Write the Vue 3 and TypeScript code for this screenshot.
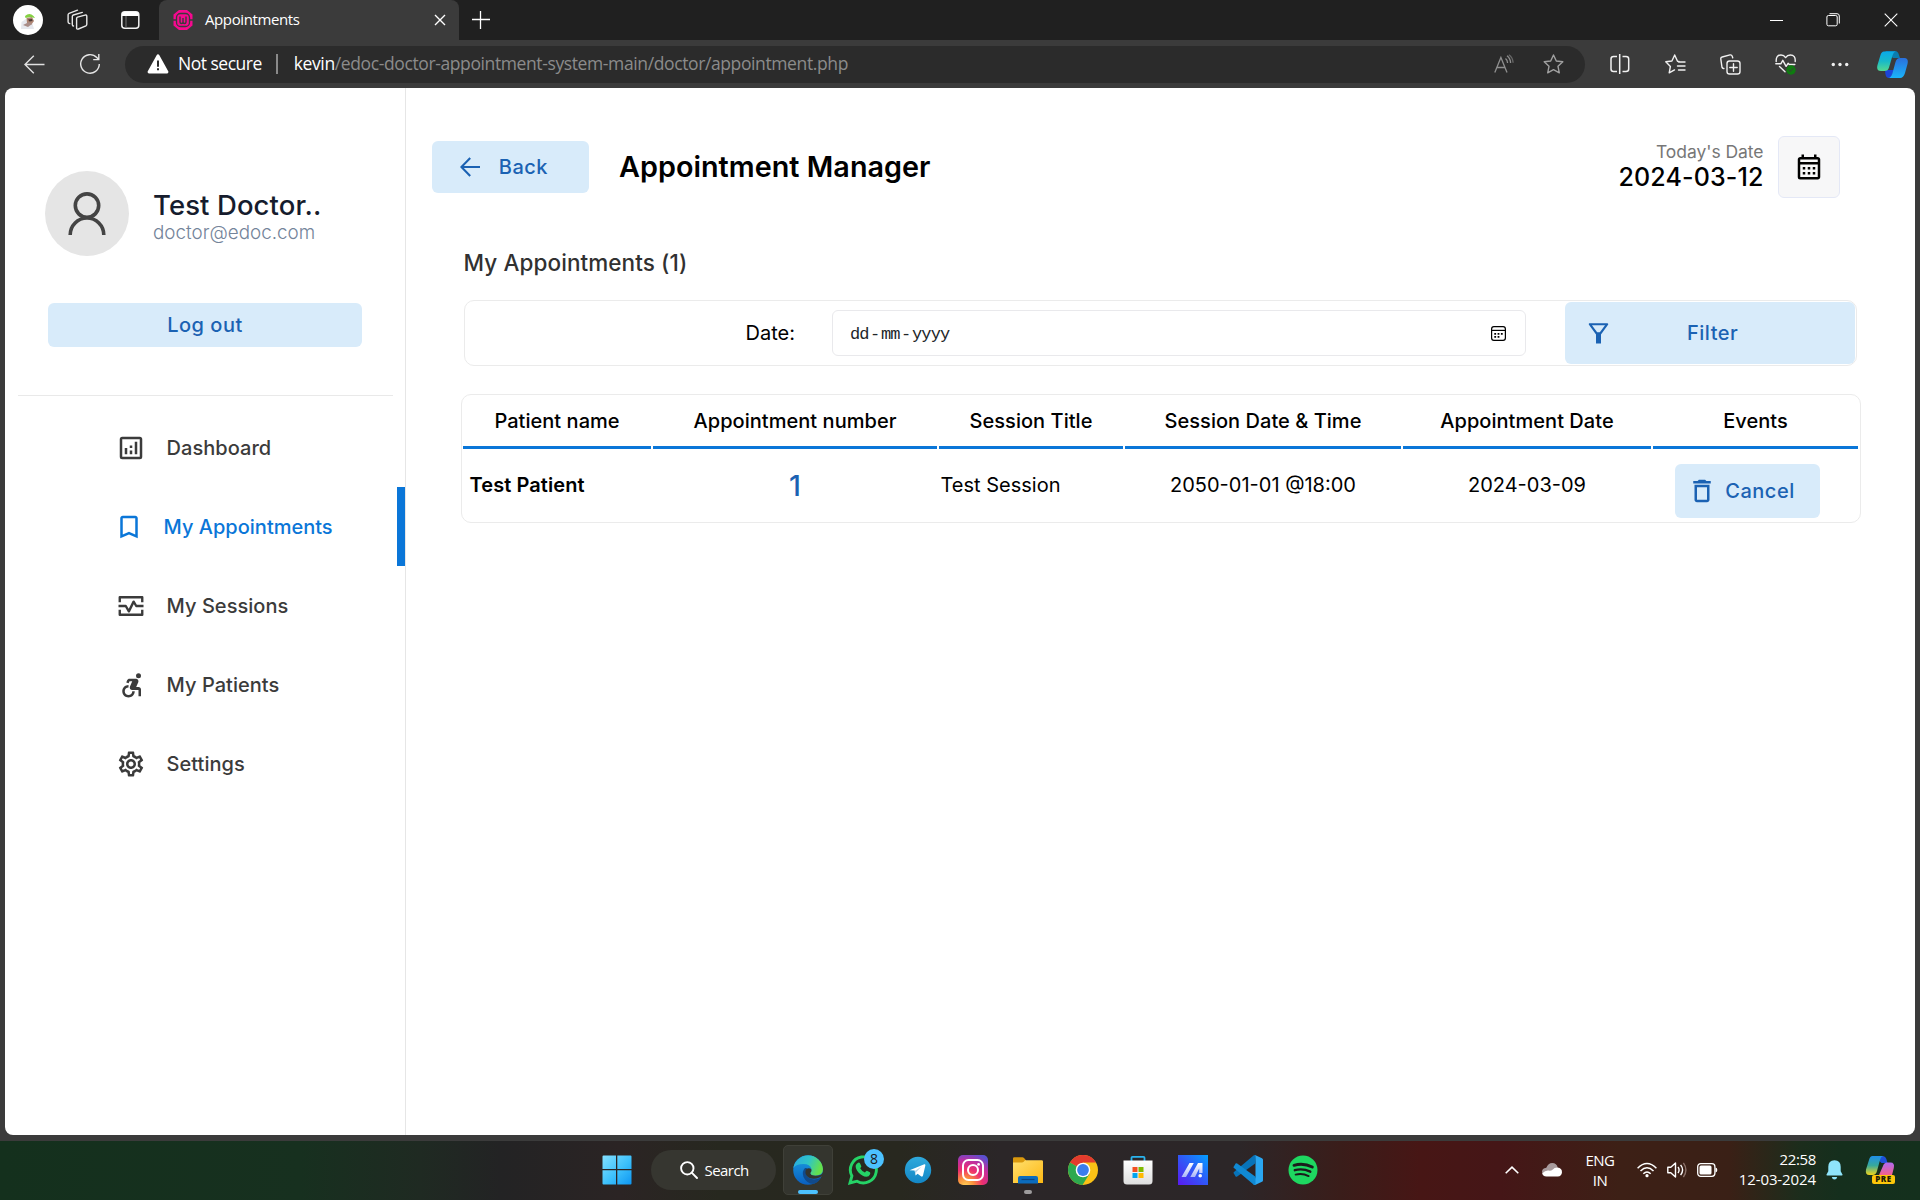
<script setup lang="ts">
interface MenuItem { id: string; label: string; active?: boolean }

const menu: MenuItem[] = [
  { id: 'dashboard', label: 'Dashboard' },
  { id: 'appointments', label: 'My Appointments', active: true },
  { id: 'sessions', label: 'My Sessions' },
  { id: 'patients', label: 'My Patients' },
  { id: 'settings', label: 'Settings' },
]

const columns: string[] = ['Patient name', 'Appointment number', 'Session Title', 'Session Date & Time', 'Appointment Date', 'Events']
</script>

<template>
  <div class="screen">
    <header class="tabstrip">
      <div class="profile">
        <svg width="30" height="30" viewBox="0 0 30 30"><circle cx="15" cy="15" r="15" fill="#fff" /><path d="M8 24l.5-7 4.500-3 6 3 2 7z" fill="#e6e8ee" /><path d="M13.500 13l5.500-1 2 4-3 4-4-2z" fill="#b08674" /><path d="M10 20l6-3 3 2-4 3z" fill="#a98d88" /><path d="M15 14.500l4-.5.5 2-3 .5z" fill="#4d3a36" /><path d="M12 11q4.500-4 8.500 0l1.500 2-5-1-4.500 1z" fill="#85d143" /></svg>
      </div>
      <svg class="ws" width="22" height="22" viewBox="0 0 22 22" fill="none" stroke="#e8e8e8" stroke-width="1.4" stroke-linejoin="round" stroke-linecap="round"><path d="M9.600 9.600q0-1 .9-1.400l7.500-2.100q1.800-.4 1.800 1.200v8q0 1-.9 1.500l-7.500 3.200q-1.800.5-1.800-1.100z" /><path d="M6.500 17q-1.200 0-1.200-1.500V7.500q0-1 1-1.500l9-2.600" /><path d="M2.800 14.600q-1.700-.2-1.700-1.500V5.800q0-1 1-1.500L10.500 1.200" /></svg>
      <svg class="vt" width="19" height="18" viewBox="0 0 19 18"><rect x=".8" y=".8" width="17" height="16.400" rx="3" fill="none" stroke="#f2f2f2" stroke-width="1.500" /><path d="M1 5V3q0-2 2-2h12.500q2 0 2 2v2z" fill="#fff" /><path d="M5 5v12" stroke="#777" stroke-width="1" /></svg>
      <div class="tab">
        <svg width="20" height="20" viewBox="0 0 20 20"><path d="M6 0h8l5.500 4.500v11L14 20H6L.5 15.500v-11z" fill="#f6098f" /><rect x="3.500" y="3.500" width="13" height="13" rx="4" fill="none" stroke="#3b3b3b" stroke-width="1.300" /><path d="M7 6.500v5.500q0 1.500 1.500 1.500T10 12V8v4q0 1.500 1.500 1.500T13 12V6.500M0 10h3.500M16.500 10H20" fill="none" stroke="#3b3b3b" stroke-width="1.400" /></svg>
        <span class="tab-title">Appointments</span>
        <svg class="tab-x" width="12" height="12" viewBox="0 0 12 12" stroke="#fff" stroke-width="1.400"><path d="M1 1l10 10M11 1L1 11" /></svg>
      </div>
      <svg class="plus" width="18" height="18" viewBox="0 0 18 18" stroke="#fff" stroke-width="1.300"><path d="M0 8.500h18M8.500 0v18" /></svg>
      <div class="grow"></div>
      <svg class="win min" width="13" height="14" viewBox="0 0 13 14" stroke="#fff" stroke-width="1"><path d="M0 7.500h13" /></svg>
      <svg class="win" width="14" height="14" viewBox="0 0 14 14" fill="none" stroke="#fff" stroke-width="1"><rect x=".9" y="2.500" width="10.300" height="10.300" rx="1.500" /><path d="M3.500.7h7.500q2.300 0 2.300 2.300v7.500" /></svg>
      <svg class="win" width="14" height="14" viewBox="0 0 14 14" stroke="#fff" stroke-width="1.100"><path d="M.7.7l12.600 12.600M13.300.7L.7 13.300" /></svg>
    </header>

    <div class="toolbar">
      <svg class="nav-back" width="21" height="19" viewBox="0 0 21 19" fill="none" stroke="#e0e0e0" stroke-width="1.400"><path d="M20.500 9.500H1M9.800.8L1 9.500l8.800 8.700" /></svg>
      <svg class="nav-reload" width="22" height="22" viewBox="0 0 22 22" fill="none" stroke="#e6e6e6" stroke-width="1.400"><path d="M20.300 11A9.300 9.300 0 1 1 17.800 4.600l1.800 1.900M19.800 1v5.600h-5.600" /></svg>
      <div class="address">
        <svg width="22" height="20" viewBox="0 0 22 20"><path d="M11 1.800L20 18H2z" fill="#fff" stroke="#fff" stroke-width="2.800" stroke-linejoin="round" /><path d="M11 6.500v6.200M11 14.300v2" stroke="#2b2b2b" stroke-width="2" /></svg>
        <span class="insecure">Not secure</span>
        <span class="sep"></span>
        <span class="url"><span class="host">kevin</span>/edoc-doctor-appointment-system-main/doctor/appointment.php</span>
        <div class="grow"></div>
        <svg class="read" width="20" height="20" viewBox="0 0 20 20" fill="none" stroke="#8f8f8f" stroke-width="1.300"><path d="M.8 18.500L6.900 3.400 13 18.500M3 13.500h7.800M11.500 4.600q2 1.500 2.100 4.400M13 1.800q3.400 2.600 3.600 7.200" /><path d="M14.800.8q4 2.600 4.300 8" opacity=".6" /></svg>
        <svg class="star" width="21" height="20" viewBox="0 0 21 20" fill="none" stroke="#a0a0a0" stroke-width="1.400" stroke-linejoin="round"><path d="M10.500 1l2.800 6 6.500.8-4.800 4.500 1.300 6.500-5.800-3.200-5.800 3.200L6 12.300 1.200 7.800 7.700 7z" /></svg>
      </div>
      <svg class="tb t1" width="20" height="20" viewBox="0 0 20 20" fill="none" stroke="#f0f0f0" stroke-width="1.500"><path d="M7 2.500H3.500Q1 2.500 1 5v10q0 2.500 2.500 2.500H7M12.500 2.500H16q2.700 0 2.700 2.500v10q0 2.500-2.700 2.500h-3.500M9.700 0v20" /></svg>
      <svg class="tb t2" width="21" height="20" viewBox="0 0 21 20" fill="none" stroke="#f0f0f0" stroke-width="1.400" stroke-linejoin="round" stroke-linecap="round"><path d="M14 7.500l-1.500-.3L9.700 1 6.900 7 .8 7.800l4.600 4.600-1.200 6.400 5.300-2.900M13.500 8h6.500M12.500 12h7.500M13.500 16h6.500" /></svg>
      <svg class="tb t3" width="21" height="21" viewBox="0 0 21 21" fill="none" stroke="#f0f0f0" stroke-width="1.400" stroke-linecap="round"><rect x="7" y="7" width="13" height="13" rx="2.600" /><path d="M13.500 9.800v7.400M9.800 13.500h7.400M3.900 14.500q-1.500.2-1.900-1.200L.8 5q-.2-1.600 1.400-2L10 .9q1.700-.3 2.200 1.200l.5 1.700" /></svg>
      <svg class="tb t4" width="22" height="21" viewBox="0 0 22 21" fill="none" stroke="#f0f0f0" stroke-width="1.400" stroke-linecap="round" stroke-linejoin="round"><path d="M1.200 7.500Q.8 1 6 1q3 0 4.600 2.600Q12.300 1 15.300 1q5.400 0 4.900 6.500M.8 9.800h5l2-3.500 3.300 6 2-3 1.200 1.200h5.500M4.500 12.500l5.500 5.300" /><circle cx="16" cy="16" r="4.700" fill="#0f7b10" stroke="none" /><path d="M13.800 16l1.500 1.500 2.700-3" stroke="#3b3b3b" stroke-width="1" /></svg>
      <svg class="tb t5" width="18" height="5" viewBox="0 0 18 5" fill="#f0f0f0"><circle cx="2.300" cy="2.500" r="1.700" /><circle cx="9" cy="2.500" r="1.700" /><circle cx="15.700" cy="2.500" r="1.700" /></svg>
      <svg class="tb t6" width="31" height="27" viewBox="0 0 31 27">
        <defs>
          <linearGradient id="cpA" x1="0" y1="0" x2="0" y2="1"><stop offset="0" stop-color="#0aa9e8" /><stop offset=".5" stop-color="#18b9c9" /><stop offset="1" stop-color="#54d990" /></linearGradient>
          <linearGradient id="cpB" x1="0" y1="0" x2="0" y2="1"><stop offset="0" stop-color="#2a6fdc" /><stop offset="1" stop-color="#1ab4fa" /></linearGradient>
        </defs>
        <path d="M8 0h10q3 0 4 4l1 3h-7z" fill="#0a7cae" /><path d="M8 19h9l-2 5q-1 3-3 3-3 0-3.600-4z" fill="#1c45d8" />
        <path d="M7 .5h11.500q-2 .5-3 4L12 16.500q-1 3.500-4.500 3.500H4q-5 0-3.500-6L3.500 4Q4.500.5 7 .5z" fill="url(#cpA)" />
        <path d="M23 7h4.500q4.300 0 3 6L28 22q-1.500 5-5 5H11.500q2.700-.5 4-5l3-11q1.200-4 4.500-4z" fill="url(#cpB)" />
      </svg>
    </div>

    <main class="page">
      <aside class="sidebar">
        <div class="who">
          <svg width="84" height="85" viewBox="0 0 84 85"><ellipse cx="42" cy="42.500" rx="42" ry="42.500" fill="#e5e5e5" /><g fill="none" stroke="#444" stroke-width="3.600"><circle cx="42" cy="34.600" r="11.700" /><path d="M25.200 64a16.800 17 0 0 1 33.600 0" /></g></svg>
          <div class="who-text">
            <p class="who-name">Test Doctor..</p>
            <p class="who-mail">doctor@edoc.com</p>
          </div>
        </div>
        <button class="btn logout">Log out</button>
        <div class="rule"></div>
        <nav>
          <a v-for="m in menu" :key="m.id" :class="['item', { active: m.active }]">
            <svg width="30" height="30" viewBox="0 0 24 24" fill="currentColor">
              <template v-if="m.id === 'dashboard'"><rect x="4" y="4" width="16" height="16" rx="1" fill="none" stroke="currentColor" stroke-width="2" /><path d="M7 12h2v5H7zM15 7h2v10h-2zM11 14h2v3h-2zM11 10h2v2h-2z" /></template>
              <path v-else-if="m.id === 'appointments'" d="M17 3H7c-1.100 0-2 .9-2 2v16l7-3 7 3V5c0-1.100-.9-2-2-2zm0 15l-5-2.180L7 18V5h10v13z" />
              <path v-else-if="m.id === 'sessions'" fill="none" stroke="currentColor" stroke-width="1.900" stroke-linejoin="round" d="M3 9V5h18v4M3 15v4h18v-4M2 12h5.800l2.500 4.300 3.800-7.800 2.100 3.500H22" />
              <template v-else-if="m.id === 'patients'"><circle cx="18" cy="4.540" r="2" /><path d="M15 17h-2c0 1.650-1.350 3-3 3s-3-1.350-3-3 1.350-3 3-3v-2c-2.760 0-5 2.240-5 5s2.240 5 5 5 5-2.240 5-5zm3-3.500h-1.860l1.670-3.670C18.420 8.500 17.440 7 15.960 7h-5.200c-.81 0-1.540.47-1.870 1.200L8.220 10l1.920.53.65-1.530H13l-1.830 4.100c-.6 1.330.39 2.900 1.850 2.900H18v5h2v-5.500c0-1.100-.9-2-2-2z" /></template>
              <path v-else d="M19.430 12.980c.04-.32.07-.64.07-.98s-.03-.66-.07-.98l2.110-1.650c.19-.15.24-.42.12-.64l-2-3.460c-.09-.16-.26-.25-.44-.25-.06 0-.12.010-.17.030l-2.490 1c-.52-.4-1.080-.73-1.690-.98l-.38-2.650C14.460 2.180 14.250 2 14 2h-4c-.25 0-.46.18-.49.42l-.38 2.650c-.61.25-1.170.59-1.690.98l-2.490-1c-.06-.02-.12-.03-.18-.03-.17 0-.34.09-.43.25l-2 3.460c-.13.22-.07.49.12.64l2.110 1.650c-.04.32-.07.65-.07.98s.03.66.07.98l-2.110 1.650c-.19.15-.24.42-.12.64l2 3.460c.09.16.26.25.44.25.06 0 .12-.01.17-.03l2.490-1c.52.4 1.080.73 1.690.98l.38 2.650c.03.24.24.42.49.42h4c.25 0 .46-.18.49-.42l.38-2.650c.61-.25 1.170-.59 1.690-.98l2.490 1c.06.02.12.03.18.03.17 0 .34-.09.43-.25l2-3.460c.12-.22.07-.49-.12-.64l-2.110-1.650zm-1.980-1.710c.04.31.05.52.05.73 0 .21-.02.43-.05.73l-.14 1.130.89.7 1.080.84-.7 1.210-1.270-.51-1.040-.42-.9.68c-.43.32-.84.56-1.250.73l-1.060.43-.16 1.130-.2 1.350h-1.400l-.19-1.350-.16-1.130-1.060-.43c-.43-.18-.83-.41-1.230-.71l-.91-.7-1.060.43-1.270.51-.7-1.210 1.080-.84.89-.7-.14-1.130c-.03-.31-.05-.54-.05-.74s.02-.43.05-.73l.14-1.130-.89-.7-1.080-.84.7-1.210 1.270.51 1.040.42.9-.68c.43-.32.84-.56 1.250-.73l1.060-.43.16-1.130.2-1.350h1.390l.19 1.350.16 1.130 1.060.43c.43.18.83.41 1.230.71l.91.7 1.060-.43 1.270-.51.7 1.210-1.070.85-.89.7.14 1.130zM12 8c-2.210 0-4 1.790-4 4s1.790 4 4 4 4-1.790 4-4-1.790-4-4-4zm0 6c-1.100 0-2-.9-2-2s.9-2 2-2 2 .9 2 2-.9 2-2 2z" />
            </svg>
            <span>{{ m.label }}</span>
          </a>
        </nav>
      </aside>

      <section class="content">
        <div class="head">
          <button class="btn back">
            <svg width="20" height="20" viewBox="0 0 20 20" fill="none" stroke="#1b62b3" stroke-width="2.100"><path d="M20 10H1.500M10.200 1L1.400 10l8.800 9" /></svg>
            <span>Back</span>
          </button>
          <h1>Appointment Manager</h1>
          <div class="grow"></div>
          <div class="today">
            <p class="today-l">Today's Date</p>
            <p class="today-d">2024-03-12</p>
          </div>
          <div class="cal">
            <svg width="30" height="30" viewBox="0 0 24 24"><path d="M19 4h-1V2h-2v2H8V2H6v2H5c-1.110 0-1.990.9-1.990 2L3 20a2 2 0 0 0 2 2h14c1.100 0 2-.9 2-2V6c0-1.100-.9-2-2-2zm0 16H5V10h14v10zm0-12H5V6h14v2zM9 14H7v-2h2v2zm4 0h-2v-2h2v2zm4 0h-2v-2h2v2zm-8 4H7v-2h2v2zm4 0h-2v-2h2v2zm4 0h-2v-2h2v2z" /></svg>
          </div>
        </div>

        <h2>My Appointments (1)</h2>

        <div class="filter">
          <label>Date:</label>
          <div class="date">
            <span class="mask"><b>dd</b>-<b>mm</b>-<b>yyyy</b></span>
            <svg width="15" height="15" viewBox="0 0 15 15"><rect x=".6" y=".6" width="13.800" height="13.800" rx="2.300" fill="none" stroke="#000" stroke-width="1.200" /><path d="M.6 4.400h13.800" stroke="#000" stroke-width="1.200" /><path d="M3.300 7.900h1.800M6.600 7.900h1.800M9.900 7.900h1.800M3.300 10.900h1.800M6.600 10.900h1.800" stroke="#000" stroke-width="1.700" /></svg>
          </div>
          <button class="btn go">
            <svg width="21" height="21" viewBox="0 0 21 21"><path d="M1.800 1.200h17.400L12.300 10.500h-3.600z" fill="none" stroke="#1b62b3" stroke-width="2.100" stroke-linejoin="round" /><path d="M8 9.500h5V20.500H8z" fill="#1b62b3" /></svg>
            <span>Filter</span>
          </button>
        </div>

        <div class="table">
          <div v-for="c in columns" :key="c" class="th">{{ c }}</div>
          <div class="td name">Test Patient</div>
          <div class="td num">1</div>
          <div class="td left">Test Session</div>
          <div class="td">2050-01-01 @18:00</div>
          <div class="td">2024-03-09</div>
          <div class="td act">
            <button class="btn cancel">
              <svg width="30" height="30" viewBox="0 0 24 24" fill="#1b62b3"><path d="M16 9v10H8V9h8m-1.500-6h-5l-1 1H5v2h14V4h-3.500l-1-1zM18 7H6v12c0 1.100.9 2 2 2h8c1.100 0 2-.9 2-2V7z" /></svg>
              <span>Cancel</span>
            </button>
          </div>
        </div>
      </section>
    </main>

    <footer class="taskbar">
      <svg class="start" width="30" height="30" viewBox="0 0 30 30"><defs><linearGradient id="wn" x1="0" y1="0" x2="1" y2="1"><stop offset="0" stop-color="#84e0ff" /><stop offset=".55" stop-color="#3cc0fb" /><stop offset="1" stop-color="#0e96f2" /></linearGradient></defs><path d="M1.500.5H14v13.500H.5V1.500q0-1 1-1zM15.300.5h13.200q1 0 1 1V14H15.300zM.5 15.300H14v14.200H1.500q-1 0-1-1zM15.300 15.300h14.200v13.200q0 1-1 1H15.300z" fill="url(#wn)" /></svg>
      <div class="search">
        <svg width="18" height="18" viewBox="0 0 18 18" fill="none" stroke="#fff" stroke-width="1.900"><circle cx="7.300" cy="7.300" r="6.200" /><path d="M11.700 11.700l5.300 5.300" stroke-linecap="round" /></svg>
        <span>Search</span>
      </div>
      <div class="app on">
        <svg width="30" height="30" viewBox="0 0 30 30">
          <defs>
            <linearGradient id="eg1" x1="0" y1="0" x2="1" y2=".3"><stop offset="0" stop-color="#2aa8e0" /><stop offset=".55" stop-color="#2fc4c8" /><stop offset="1" stop-color="#64e04c" /></linearGradient>
            <linearGradient id="eg2" x1="0" y1="0" x2="0" y2="1"><stop offset="0" stop-color="#1b9fe2" /><stop offset="1" stop-color="#0a5fc0" /></linearGradient>
          </defs>
          <circle cx="15" cy="15" r="14.800" fill="url(#eg2)" />
          <path d="M12 13q-3.500 3.500-1.500 9 3 6.500 10 7 5-1.500 7.500-6.500-7 3.500-12 .5-5-4-2-10z" fill="#114a8b" />
          <path d="M30.500 16q-.5 4.500-8 4.500-5 0-5-2.500 1.500-1.300 1.200-3.500-3-2.500-5.700 0-2 5 3 8.200 5 2.500 11-.5l3.500-2z" fill="#34352e" />
          <path d="M.3 13A15 15 0 0 1 30 14q0 6.500-7.500 6.500-5 0-5-2.500 1.800-1.500 1-4Q17 9 10.500 9 3 9 .3 13z" fill="url(#eg1)" />
        </svg>
        <i class="bar"></i>
      </div>
      <div class="app">
        <svg width="30" height="30" viewBox="0 0 30 30"><path d="M2 28l1.900-7A13 13 0 1 1 9 26.200z" fill="none" stroke="#25d366" stroke-width="2.900" /><path d="M10.200 7.800q1-.6 1.800.5l1.300 2.900q.2.700-1.100 2.100 1.600 3 4.700 4.300 1.400-1.900 2-1.800l3 1.500q.7.500.2 1.900-1.100 2.500-3.800 2.500-4-.3-7.800-4.300-3.500-4-2.700-7.100.7-2 2.400-2.500z" fill="#25d366" /></svg>
        <b class="count">8</b>
      </div>
      <div class="app"><svg width="30" height="30" viewBox="0 0 30 30"><defs><linearGradient id="tg" x1="0" y1="0" x2="0" y2="1"><stop offset="0" stop-color="#2fa9dc" /><stop offset="1" stop-color="#1387c6" /></linearGradient></defs><circle cx="15" cy="15" r="13.200" fill="url(#tg)" /><path d="M6.600 15.200L21.300 9.300q1.500-.4 1 1.500L20 20.600q-.5 1.700-2 .7l-3.400-2.600-2 1.900-1-5z" fill="#fff" /><path d="M11.800 16l6.700-4.500-5.200 5.500-.6 3z" fill="#b8d5e8" /></svg></div>
      <div class="app"><svg width="30" height="30" viewBox="0 0 30 30"><defs><radialGradient id="ig" cx=".25" cy="1.050" r="1.150"><stop offset="0" stop-color="#ffd75a" /><stop offset=".25" stop-color="#fb8f3c" /><stop offset=".5" stop-color="#ed2f6f" /><stop offset=".75" stop-color="#c22e9e" /><stop offset="1" stop-color="#5a50d0" /></radialGradient></defs><rect width="30" height="30" rx="5" fill="url(#ig)" /><g fill="none" stroke="#fff" stroke-width="2"><rect x="5" y="5" width="20" height="20" rx="5.500" /><circle cx="15" cy="15" r="5" /></g><circle cx="20.600" cy="9.400" r="1.400" fill="#fff" /></svg></div>
      <div class="app">
        <svg width="30" height="30" viewBox="0 0 30 30"><defs><linearGradient id="fd" x1="0" y1="0" x2="1" y2="1"><stop offset="0" stop-color="#ffdf6e" /><stop offset="1" stop-color="#fdb813" /></linearGradient></defs><path d="M0 9V3.500q0-1.300 1.300-1.300h8.200q.8 0 1.500.8l2 2.200V9z" fill="#d9980d" /><path d="M0 7.500h9q1 0 1.700-.8l1.300-1.500h16.500q1.500 0 1.500 1.300V28H0z" fill="url(#fd)" /><path d="M5 28.500V23q0-2 2-2h16q2 0 2 2v5.500z" fill="#0c6cbd" /><path d="M8.500 24.500h13" stroke="#0a4584" stroke-width="1.200" /></svg>
        <i class="dot"></i>
      </div>
      <div class="app"><svg width="30" height="30" viewBox="0 0 30 30"><circle cx="15" cy="15" r="15" fill="#fbc116" /><path d="M15 15L2 7.500A15 15 0 0 1 28 7.500H15z" fill="#e33b2e" /><path d="M2 7.500A15 15 0 0 0 14.500 30L21.500 18.800 15 15z" fill="#2da94f" /><circle cx="15" cy="15" r="7.300" fill="#fff" /><circle cx="15" cy="15" r="5.900" fill="#3b7ded" /></svg></div>
      <div class="app"><svg width="30" height="30" viewBox="0 0 30 30"><defs><linearGradient id="st" x1="0" y1="0" x2="0" y2="1"><stop offset="0" stop-color="#fff" /><stop offset="1" stop-color="#dedede" /></linearGradient></defs><path d="M8.500 7V2.800q0-1 1-1h11q1 0 1 1V7" fill="none" stroke="#2ab4ee" stroke-width="1.800" /><path d="M.5 5.500h29V26q0 3.500-3.500 3.500H4Q.5 29.500.5 26z" fill="url(#st)" /><path d="M9.500 12h5v5h-5z" fill="#f25022" /><path d="M15.500 12h5v5h-5z" fill="#7fba00" /><path d="M9.500 18h5v5h-5z" fill="#00a4ef" /><path d="M15.500 18h5v5h-5z" fill="#ffb900" /></svg></div>
      <div class="app"><svg width="30" height="30" viewBox="0 0 30 30"><defs><linearGradient id="as" x1="0" y1="1" x2="1" y2="0"><stop offset="0" stop-color="#5a19f0" /><stop offset=".5" stop-color="#3157f7" /><stop offset="1" stop-color="#02a0ff" /></linearGradient><linearGradient id="as2" x1="0" y1="0" x2="0" y2="1"><stop offset="0" stop-color="#fff" /><stop offset="1" stop-color="#a9b6f8" /></linearGradient></defs><path d="M0 0h30v30H0z" fill="url(#as)" /><path d="M11.500 8h4.300L8 22H3.500zM20 8h4.500v10h-3.300v-4.500L17 22h-4.700z" fill="url(#as2)" /><circle cx="22.200" cy="20.700" r="1.800" fill="#fff" /></svg></div>
      <div class="app"><svg width="30" height="30" viewBox="0 0 30 30"><path d="M22 0l7 3.200q1 .5 1 1.600v20.400q0 1.100-1 1.600L22 30q-.8.200-1.500-.5L22.500 22V8z" fill="#2aa7f2" /><path d="M1 18.800q-1-1 0-1.900L20.500.5Q21.500-.3 22.500.3V8.200L4.200 21.500q-.9.500-1.600-.1z" fill="#0873b9" /><path d="M1 11.200q-1 1 0 1.900l19.500 16.400q1 .8 2 .2v-7.900L4.200 8.500q-.9-.5-1.600.1z" fill="#1089d3" /></svg></div>
      <div class="app"><svg width="30" height="30" viewBox="0 0 30 30"><circle cx="15" cy="15" r="14.500" fill="#1ed760" /><g fill="none" stroke="#1b1b1b" stroke-linecap="round"><path d="M6 10.300q9.500-2.700 18.300 1.700" stroke-width="2.900" /><path d="M6.800 15.200q8-2.200 15.500 1.500" stroke-width="2.400" /><path d="M7.600 19.600q7-1.700 13 1.500" stroke-width="1.900" /></g></svg></div>
      <div class="grow"></div>
      <svg class="chev" width="14" height="8" viewBox="0 0 14 8" fill="none" stroke="#fff" stroke-width="1.600"><path d="M.7 7.300L7 1.200l6.300 6.100" /></svg>
      <svg class="cloud" width="20" height="14" viewBox="0 0 20 14"><path d="M5 12.500Q0 12.500 0 8.800q0-3.500 4.300-4Q6.200 0 10.200 0q4.500 0 5.500 4.600L10 10z" fill="#a89b9d" /><path d="M4.500 13.500Q.4 13 .3 10.200q3-3 6.200-2.700Q9 8 10.500 6.800 12.500 4.500 15.600 4.600q4.400.6 4.400 4.600-.3 4-4.200 4.300z" fill="#fff" /></svg>
      <div class="lang"><span>ENG</span><span>IN</span></div>
      <svg class="wifi" width="20" height="16" viewBox="0 0 20 16" fill="none" stroke="#fff" stroke-width="1.500"><path d="M.6 6.200q9.400-9.400 18.800 0M3.500 9q6.500-6.400 13 0M6.300 11.800q3.700-3.600 7.400 0" /><circle cx="10" cy="13.700" r="1.600" fill="#fff" stroke="none" /></svg>
      <svg class="vol" width="21" height="18" viewBox="0 0 21 18" fill="none" stroke="#fff" stroke-width="1.400" stroke-linejoin="round"><path d="M.8 6.200h3L8.500 2v14l-4.700-4.200h-3zM11 6q2.200 3 0 6M13.600 3.900q4 5.100 0 10.200" /><path d="M16.400 1.900q5 7 0 14.200" stroke="#8a7068" /></svg>
      <svg class="bat" width="21" height="14" viewBox="0 0 21 14"><rect x=".7" y=".7" width="17.200" height="12.600" rx="3" fill="none" stroke="#fff" stroke-width="1.300" /><rect x="2.500" y="2.500" width="12" height="9" rx="1.500" fill="#fff" /><path d="M18.500 4.500q1.800.3 1.800 2.500t-1.800 2.500z" fill="#fff" /></svg>
      <div class="clock"><span>22:58</span><span>12-03-2024</span></div>
      <svg class="bell" width="17" height="20" viewBox="0 0 17 20" fill="#8fe4fb"><path d="M8.500.3q6.200.3 6.200 6.500v4.500l1.900 3.500q0 .8-.8.8H1.200q-.8 0-.8-.8l1.900-3.500V6.800Q2.300.6 8.500.3zM5.800 17h5.400q-.5 2.500-2.700 2.500T5.800 17z" /></svg>
      <svg class="pilot" width="30" height="30" viewBox="0 0 30 30">
        <defs>
          <linearGradient id="p1" x1="0" y1="0" x2="0" y2="1"><stop offset="0" stop-color="#1f8fe9" /><stop offset=".5" stop-color="#37a99b" /><stop offset="1" stop-color="#f0d51b" /></linearGradient>
          <linearGradient id="p2" x1="0" y1="0" x2="0" y2="1"><stop offset="0" stop-color="#b06af0" /><stop offset="1" stop-color="#f4608c" /></linearGradient>
        </defs>
        <path d="M9 1h8.500q3 0 4 3.500l1 3.500h-6z" fill="#1d50d8" /><path d="M7.500 1H18q-2.200.5-3 4L12 16q-1 4-4.500 4H4.500Q0 20 1 14.500L4 5q1-4 3.500-4z" fill="url(#p1)" /><path d="M22 7.500h3.500q4.500 0 3.300 5.500L27 20H14l4-9q1-3.500 4-3.500z" fill="url(#p2)" />
        <rect x="7" y="20" width="23" height="9" rx="2" fill="#fdc60a" /><text x="18.500" y="27.400" text-anchor="middle" font-family="Open Sans, sans-serif" font-size="8" font-weight="800" letter-spacing=".6" fill="#201a05">PRE</text>
      </svg>
    </footer>
  </div>
</template>

<style>
body { margin: 0; background: #3b3b3b; }
</style>

<style scoped>
.screen { width: 1920px; height: 1200px; overflow: hidden; display: flex; flex-direction: column; background: #3b3b3b; font-family: Inter, "Liberation Sans", sans-serif; }
p, h1, h2 { margin: 0; }
svg { display: block; flex: none; }
.grow { flex: 1; }
.btn { display: flex; align-items: center; border: 0; padding: 0; border-radius: 6px; background: #d8ebfa; color: #1b62b3; font: 500 20px/24px Inter, sans-serif; letter-spacing: .5px; flex: none; }

.tabstrip { height: 40px; flex: none; display: flex; align-items: center; background: #202020; font-family: "Open Sans", sans-serif; color: #fff; }
.profile { margin-left: 13px; }
.ws { margin-left: 24px; }
.vt { margin-left: 32px; }
.tab { width: 300px; height: 40px; margin-left: 19px; border-radius: 8px 8px 0 0; background: #3b3b3b; display: flex; align-items: center; padding-left: 14px; box-sizing: border-box; }
.tab-title { margin-left: 12px; padding-bottom: 2px; font-size: 15px; letter-spacing: -.4px; flex: 1; }
.tab-x { margin-right: 13.500px; }
.plus { margin-left: 13px; }
.win { margin-right: 44px; }
.win.min { margin-right: 43px; }
.win:last-child { margin-right: 22px; }

.toolbar { height: 48px; flex: none; display: flex; align-items: center; }
.nav-back { margin-left: 24px; }
.nav-reload { margin-left: 34px; }
.address { width: 1460px; height: 37px; margin-left: 24px; border-radius: 19px; background: #2b2b2b; display: flex; align-items: center; box-sizing: border-box; padding-left: 22px; font: 17.5px/24px "Open Sans", sans-serif; color: #fff; }
.insecure { margin-left: 9px; padding-bottom: 2px; letter-spacing: -.5px; }
.sep { width: 1.500px; height: 20px; background: #8a8a8a; margin: 0 16px 0 14.500px; }
.url { color: #8b8b8b; white-space: nowrap; padding-bottom: 2px; letter-spacing: -.385px; }
.host { color: #fff; }
.read { margin-right: 29px; }
.star { margin-right: 21px; }
.t1 { margin-left: 24.500px; }
.t2 { margin-left: 35.500px; }
.t3 { margin-left: 34px; }
.t4 { margin-left: 34px; }
.t5 { margin-left: 34px; }
.t6 { margin-left: 28px; }

.page { margin: 0 5px; height: 1047px; flex: none; background: #fff; border-radius: 8px; display: flex; overflow: hidden; }
.sidebar { width: 401px; box-sizing: border-box; border-right: 1px solid #e6e6e6; flex: none; padding-top: 83px; }
.who { display: flex; padding-left: 40px; }
.who-text { padding: 18px 0 0 24px; }
.who-name { font: 500 27.5px/32px Inter, sans-serif; letter-spacing: .1px; color: #161c2d; }
.who-mail { font: 300 18.850px/24px Inter, sans-serif; color: #74849a; }
.logout { margin: 47px 0 0 43px; width: 314px; height: 44px; justify-content: center; }
.rule { margin: 48px 12px 0 13px; height: 1px; background: #e9e9e9; }
.sidebar nav { margin-top: 12px; }
.item { height: 79px; display: flex; align-items: center; padding-left: 111px; color: #3b3b3b; font: 500 20px/24px Inter, sans-serif; letter-spacing: .03px; }
.item span { margin-left: 20.600px; }
.item.active { color: #0a76d8; padding-left: 108.500px; border-right: 8px solid #0a76d8; }
.item.active span { margin-left: 20.100px; letter-spacing: 0; }

.content { flex: 1; min-width: 0; }
.head { display: flex; align-items: center; margin: 48px 75px 0 26px; height: 62px; }
.back { width: 157px; height: 52px; padding-left: 28px; box-sizing: border-box; }
.back span { margin-left: 18.800px; }
h1 { margin-left: 30px; font: 600 28.750px/36px Inter, sans-serif; letter-spacing: .03px; color: #000; }
.today { text-align: right; padding-bottom: 3px; }
.today-l { font: 400 17.500px/22px Inter, sans-serif; letter-spacing: -.05px; color: #777; }
.today-d { font: 500 25px/28px Inter, sans-serif; letter-spacing: .13px; color: #000; }
.cal { width: 62px; height: 62px; box-sizing: border-box; border: 1px solid #e4e8f6; border-radius: 6px; background: #f7f7f8; margin-left: 14.500px; display: flex; align-items: center; justify-content: center; }
h2 { margin: 50px 0 0 57.600px; font: 500 22.500px/30px Inter, sans-serif; letter-spacing: .08px; color: #313131; }
.filter { margin: 22px 58px 0 58px; height: 66px; box-sizing: border-box; border: 1px solid #ebebeb; border-radius: 10px; display: flex; align-items: center; }
.filter label { width: 330px; text-align: right; font: 400 20px/24px Inter, sans-serif; }
.date { margin-left: 37px; width: 694px; height: 46px; box-sizing: border-box; border: 1px solid #e9e9ec; border-radius: 6px; display: flex; align-items: center; justify-content: space-between; padding: 0 19px 0 15.500px; font: 17px/20px "Liberation Mono", monospace; color: #212529; }
.mask { padding-top: 3px; letter-spacing: -.8px; }
.mask b { font-weight: 400; padding: 0 1.400px; }
.go { margin-left: 39px; width: 290px; height: 62px; padding-left: 22.500px; box-sizing: border-box; }
.go span { margin-left: 78.500px; }
.table { margin: 28px 54px 0 55px; box-sizing: border-box; height: 129px; border: 1px solid #ebebeb; border-radius: 10px; padding: 2px 2px 0 1px; display: grid; grid-template-columns: 188px 284px 184px 276px 248px 205px; column-gap: 2px; grid-template-rows: 52px 73px; }
.th { text-align: center; font: 500 20px/24px Inter, sans-serif; letter-spacing: .04px; padding-top: 12px; border-bottom: 3px solid #0a76d8; }
.td { text-align: center; font: 400 20px/24px Inter, sans-serif; padding-top: 24px; }
.name { text-align: left; font-weight: 600; padding-left: 6.500px; letter-spacing: .08px; }
.num { font-size: 28.750px; font-weight: 500; color: #1b62b3; padding-top: 25px; }
.left { text-align: left; padding-left: 1.500px; }
.act { padding: 15px 0 0 22px; }
.cancel { width: 145px; height: 54px; padding-left: 12px; box-sizing: border-box; }
.cancel span { margin-left: 8.300px; }

.taskbar { margin-top: 6px; height: 59px; box-sizing: border-box; padding-bottom: 1px; flex: none; display: flex; align-items: center; color: #fff; font-family: "Open Sans", sans-serif; background: linear-gradient(90deg, #14301d 0, #17301f 300px, #1f2a22 420px, #232324 500px, #2b2424 620px, #27281f 720px, #28281f 900px, #2b2628 1000px, #2c2628 1240px, #3a1d1a 1340px, #471615 1420px, #451617 1500px, #3d2016 1620px, #3a2016 1730px, #1c2d1c 1800px, #152f1d 1840px, #14301d 1920px); }
.start { margin-left: 602px; }
.search { margin-left: 19px; width: 125px; height: 40px; border-radius: 20px; background: #363630; display: flex; align-items: center; padding-left: 29px; box-sizing: border-box; font-size: 15px; }
.search span { margin-left: 6.500px; letter-spacing: -.55px; }
.app { width: 50px; height: 50px; margin-right: 5px; display: flex; align-items: center; justify-content: center; position: relative; box-sizing: border-box; }
.search + .app { margin-left: 7px; }
.on { background: #34352e; border: 1px solid #3f4038; border-radius: 5px; }
.bar { position: absolute; left: 14px; bottom: 0; width: 20px; height: 4px; border-radius: 2px; background: #4cc2ff; }
.dot { position: absolute; left: 21px; bottom: 1px; width: 8px; height: 4px; border-radius: 2px; background: #9d9b9c; }
.count { position: absolute; left: 26px; top: 4px; width: 20px; height: 20px; border-radius: 10px; background: #4cc2ff; color: #1b1b1b; font: 400 14px/20px "Open Sans", sans-serif; text-align: center; }
.chev { margin-right: 23px; }
.cloud { margin-right: 23px; }
.lang { display: flex; flex-direction: column; align-items: center; font-size: 15px; line-height: 20px; letter-spacing: -.5px; width: 30px; padding-bottom: 1px; margin-right: 22px; }
.wifi { margin-right: 10px; }
.vol { margin-right: 9px; }
.bat { margin-right: 20px; }
.clock { display: flex; flex-direction: column; align-items: flex-end; font-size: 15px; line-height: 20px; letter-spacing: -.1px; white-space: nowrap; width: 78px; padding-bottom: 2px; margin-right: 10px; }
.clock span:first-child { letter-spacing: -.35px; }
.bell { margin-right: 22px; }
.pilot { margin-right: 25px; }
</style>
